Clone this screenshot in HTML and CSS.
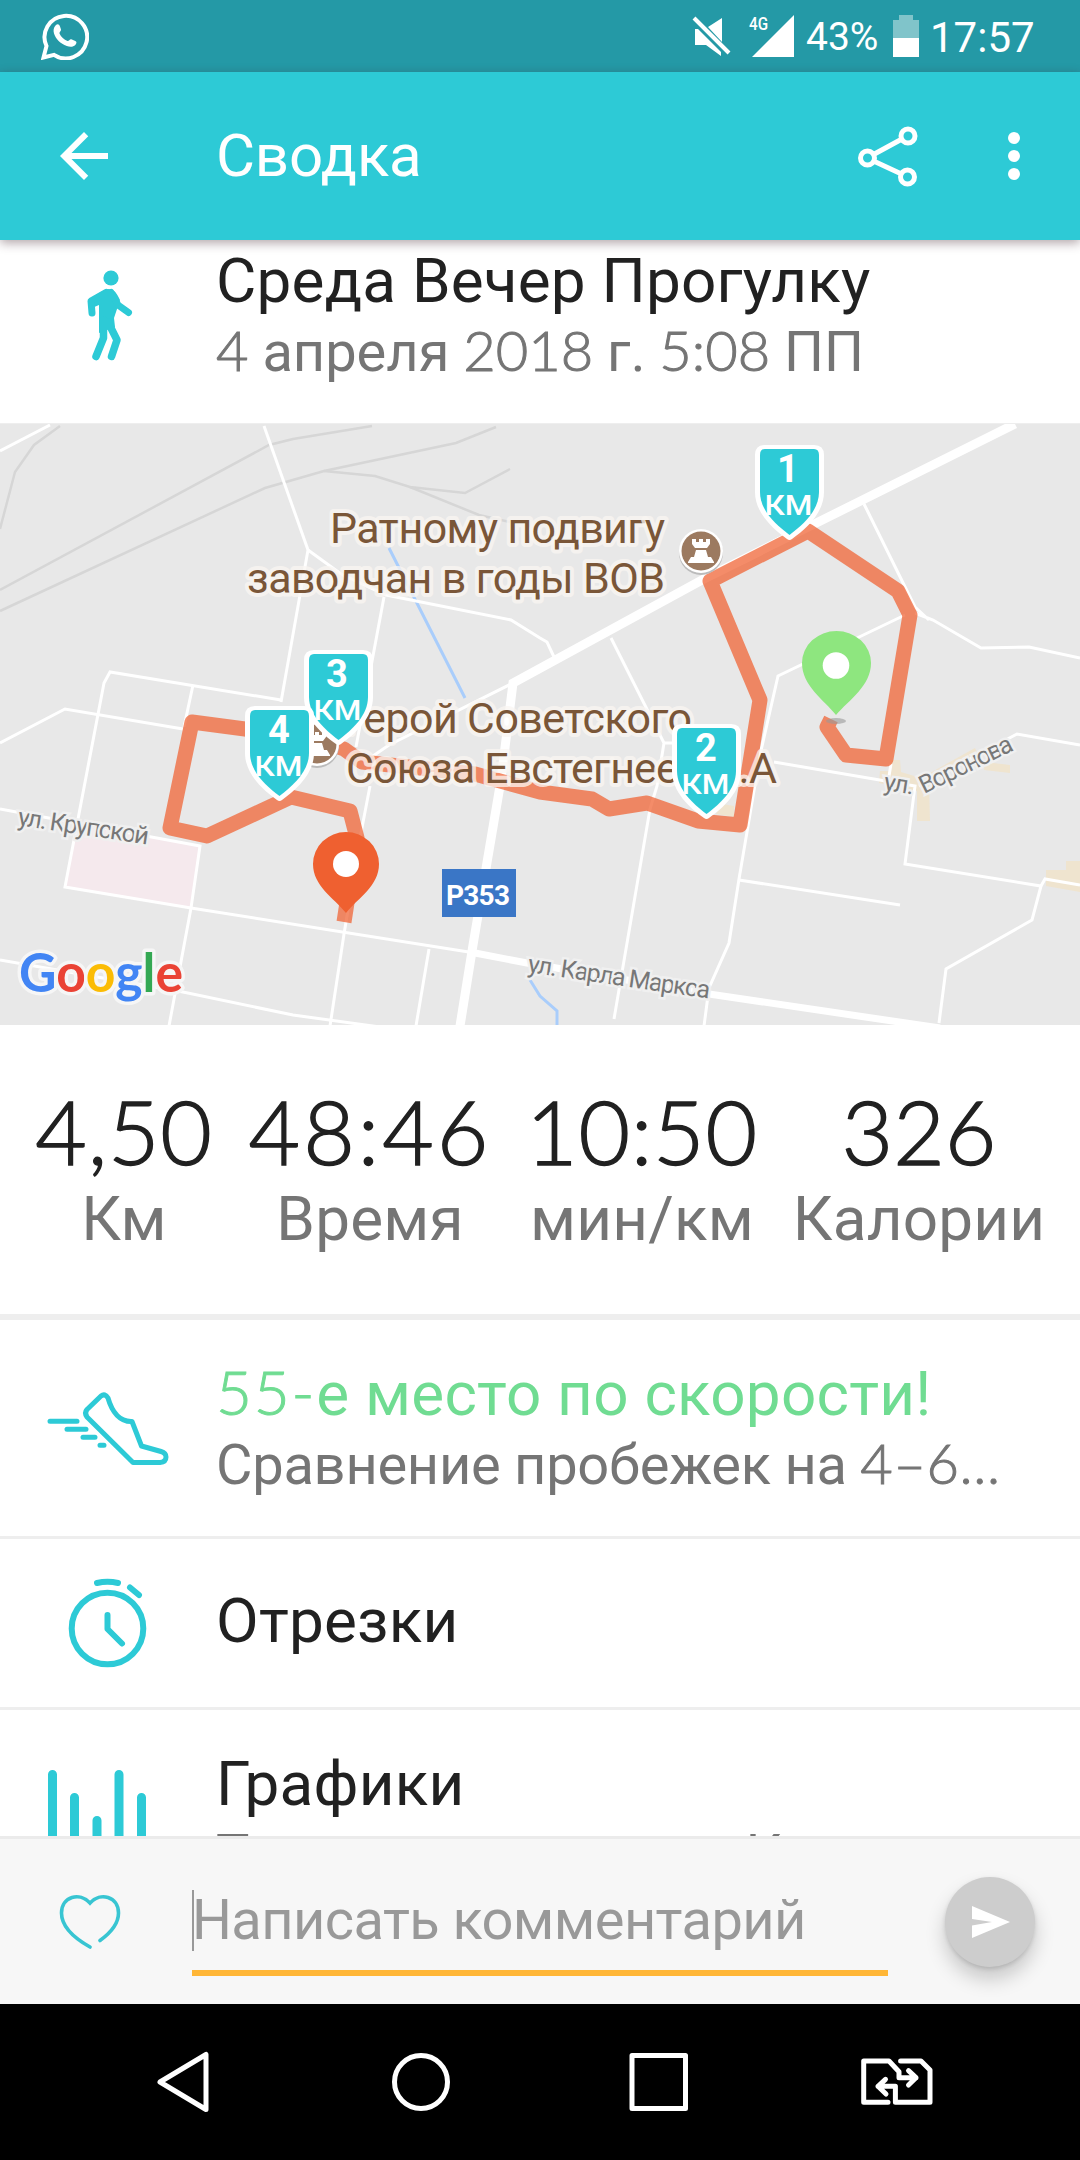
FILE: index.html
```html
<!DOCTYPE html>
<html lang="ru">
<head>
    <meta charset="UTF-8">
    <meta name="viewport" content="width=device-width, initial-scale=1.0">
    <title>Сводка</title>
    <link rel="stylesheet" href="styles.css">
</head>
<body>
    <div class="status-bar">
        <svg class="whatsapp" viewBox="0 0 48 48">
            <path d="M2.500 45.500 5.500 34A21.300 21.300 0 1 1 13 42.800Z" fill="none" stroke="#fff" stroke-width="4"/>
            <path d="M14.500 13.500c2-2 3.500-1.500 4.500 1l1 3c.4 1.500-2 2.800-1.500 4 1.500 3.500 4.500 6 8 7.500 1.200.5 2.300-2.200 3.800-1.700l4 1.700c1.800.9 1.300 2.500 0 4-2 2.200-5.500 2.200-8.500 1-6.500-2.500-11-7-12.800-12.500-.8-3-.5-6 1.500-8z" fill="#fff"/>
        </svg>
        <svg class="mute" viewBox="0 0 40 40">
            <path d="M30 2v24L16 11zM3 13h3l23 23v4L14 29H3z" fill="#fff"/>
            <path d="M2 2 37 37" stroke="#fff" stroke-width="4"/>
        </svg>
        <svg class="signal" viewBox="0 0 46 42">
            <path d="M46 0v42H4z" fill="#fff"/>
            <text x="1" y="15" textLength="19" lengthAdjust="spacingAndGlyphs">4G</text>
        </svg>
        <span class="percent">43%</span>
        <svg class="battery" viewBox="0 0 26 42">
            <path d="M6 0h14v5h6v18H0V5h6z" fill="#80c4ca"/>
            <path d="M0 23h26v19H0z" fill="#fff"/>
        </svg>
        <span class="clock">17:57</span>
    </div>

    <div class="app-bar">
        <svg class="back" viewBox="0 0 24 24"><path d="M20 11H7.830l5.590-5.590L12 4l-8 8 8 8 1.410-1.410L7.830 13H20z" fill="#fff"/></svg>
        <h1>Сводка</h1>
        <svg class="share" viewBox="0 0 60 62" fill="none" stroke="#fff" stroke-width="5">
            <circle cx="50" cy="11" r="7"/>
            <circle cx="9.500" cy="33" r="7"/>
            <circle cx="49.500" cy="52" r="7"/>
            <path d="M15.500 29.500 44 14M15.500 36 43.500 49"/>
        </svg>
        <svg class="more" viewBox="0 0 12 48" fill="#fff">
            <circle cx="6" cy="6" r="6"/><circle cx="6" cy="24" r="6"/><circle cx="6" cy="42" r="6"/>
        </svg>
    </div>

    <div class="content">
        <div class="row activity">
            <svg class="row-icon" viewBox="0 0 216 183" fill="none" stroke="#2dcad6" stroke-linecap="round" stroke-linejoin="round">
                <circle cx="111" cy="38" r="7.600" fill="#2dcad6" stroke="none"/>
                <path d="M90 61c5-6 11-10 18-12 7 0 9 5 12 11l-6 18 1 9-16 6V65l-7 3z" fill="#2dcad6" stroke="none"/>
                <path d="M92 73 91 61 106 52.500M111 52.500 118 65 128.500 72.500" stroke-width="7"/>
                <path d="M103.500 80v18L96 116.500M108 82l9 18-5.500 16.500" stroke-width="7.500"/>
            </svg>
            <div class="row-text">
                <h2 class="name">Среда Вечер Прогулку</h2>
                <p class="date"><span class="num">4</span> апреля <span class="num">2018</span> г. <span class="num">5:08</span> ПП</p>
            </div>
        </div>

        <svg class="map" viewBox="0 424 1080 601">
            <defs>
                <g id="shield">
                    <path d="M10 0H59Q69 0 69 10V47C69 68 51 84 37 94Q34.500 96 32 94C18 84 0 68 0 47V10Q0 0 10 0Z" fill="#fff"/>
                    <path d="M10 4H59Q64 4 64 10V47C64 65 49 79 34.500 90C20 79 5 65 5 47V10Q5 4 10 4Z" fill="#2dcad6"/>
                    <text class="km" x="9.500" y="69.500" textLength="48" lengthAdjust="spacingAndGlyphs">КМ</text>
                </g>
                <g id="castle">
                    <circle cx="0" cy="2" r="22" fill="#bbb"/>
                    <circle r="22" fill="#fff"/>
                    <circle r="19.500" fill="#9c7a60"/>
                    <path d="M-9-12h4v3h3v-3h4v3h3v-3h4v5l-3 4H-6l-3-4zM-5-1H5L7 6h3l3 5v1H-13v-1l3-5h3z" fill="#fff"/>
                </g>
            </defs>
            <rect y="424" width="1080" height="602" fill="#e8e8e8"/>

            <!-- areas -->
            <path d="M77 823 200 846 191 908 65 887Z" fill="#f5e9ed"/>
            <g fill="#efe4cf">
                <path d="M890 760h10l1 12 20 6 54-30 4 8-50 27 1 38h-13v-30l-38-8 1-12h10zM985 762l25 3v8l-26-3zM1046 870h20v-9h14v31l-34-6zM722 804l12 2v11l-18-3z"/>
            </g>

            <!-- railways -->
            <g class="rail">
                <path d="M0 590 269 445 293 439 372 426"/>
                <path d="M0 611 265 488 324 471 456 443 496 427"/>
                <path d="M324 471 375 476 410 487 465 493 510 469"/>
                <path d="M410 487 479 515 510 522"/>
                <path d="M0 529 15 472 34 445 60 426"/>
            </g>

            <!-- water -->
            <path d="M389 548 465 698M530 980 540 996 557 1011V1026" fill="none" stroke="#a9cdfb" stroke-width="3"/>

            <!-- streets -->
            <g class="street">
                <path d="M0 451 50 425"/>
                <path d="M264 426 308 550 281 702"/>
                <path d="M308 550 341 574 386 595 511 620 540 638 547 642 554 657"/>
                <path d="M384 597 356 747M370 786 360 838 344 934 330 1026"/>
                <path d="M370 758 389 745 511 684"/>
                <path d="M281 700 110 672 104 683 65 887 191 908 475 953"/>
                <path d="M193 685 184 727M0 743 65 709 183 729"/>
                <path d="M0 809 200 846 191 908 169 1026"/>
                <path d="M0 960 183 992 293 1015 380 1027M429 949 416 1026"/>
                <path d="M611 638 664 743 657 786 650 809 614 1019M664 743H678"/>
                <path d="M864 504 915 607 929 620M915 613 933 620 981 648 1029 647 1080 658"/>
                <path d="M905 615 778 676 760 755 747 832 739 879 729 943 709 988 704 1026"/>
                <path d="M774 762 915 786 905 864 1041 886 1045 879 1080 885"/>
                <path d="M1041 886 1032 920 946 969 939 1023"/>
                <path d="M891 764 888 782M919 786 1017 734 1080 745M739 880 900 905"/>
            </g>
            <path d="M1015 424 702 580 513 683 501 780 473 945 460 1026" fill="none" stroke="#fff" stroke-width="9"/>
            <path d="M475 953 527 963 709 994 940 1028" fill="none" stroke="#fff" stroke-width="7"/>

            <!-- street names -->
            <g class="street-name">
                <text transform="translate(17 825) rotate(8.500)" textLength="132">ул. Крупской</text>
                <text transform="translate(527 972) rotate(8.300)" textLength="184">ул. Карла Маркса</text>
                <text transform="translate(883 790) rotate(8.500)" textLength="30">ул.</text>
                <text transform="translate(924 794) rotate(-26)" textLength="101">Воронова</text>
            </g>

            <!-- track -->
            <path class="track" d="M831 719 827 727 846 755 886 759 910 615 898 591 808 531 710 581 760 700 740 825 698 821 647 803 609 809 592 799 540 792 475 774 362 762 344 749 320 741 245 729 192 722 170 828 207 836 291 797 350 811 357 838 344 922"/>

            <use href="#castle" x="701" y="551"/>
            <use href="#castle" x="317" y="744"/>
            <g class="poi">
                <text x="330" y="543" textLength="335">Ратному подвигу</text>
                <text x="247" y="593" textLength="418">заводчан в годы ВОВ</text>
                <text x="344" y="733" textLength="348">Герой Советского</text>
                <text x="346" y="783" textLength="431">Союза Евстегнеев А.А</text>
            </g>

            <rect x="442" y="869" width="74" height="48" fill="#3a76c6"/>
            <text class="road" x="446" y="905" textLength="64">Р353</text>

            <!-- kilometre marks -->
            <g class="mark" transform="translate(304 650)"><use href="#shield"/><text x="33" y="37">3</text></g>
            <g class="mark" transform="translate(245 706)"><use href="#shield"/><text x="34" y="37">4</text></g>
            <g class="mark" transform="translate(672 724)"><use href="#shield"/><text x="34" y="37">2</text></g>
            <g class="mark" transform="translate(755 445)"><use href="#shield"/><text x="33" y="37">1</text></g>

            <!-- start and finish -->
            <ellipse cx="836" cy="721" rx="10" ry="3" fill="#999" opacity=".6"/>
            <path d="M836 715C824 700 802 686 802 663A34.500 32 0 0 1 871 663C871 686 849 700 836 715Z" fill="#8ee67f"/>
            <circle cx="836" cy="665.500" r="13.300" fill="#fff"/>
            <path d="M346 913C334 898 313 886 313 864A33 32 0 0 1 379 864C379 886 358 898 346 913Z" fill="#ef6030"/>
            <circle cx="346" cy="864" r="13" fill="#fff"/>

            <text class="google" x="19" y="992" textLength="164" lengthAdjust="spacingAndGlyphs"><tspan fill="#4285f4">G</tspan><tspan fill="#ea4335">o</tspan><tspan fill="#fbbc05">o</tspan><tspan fill="#4285f4">g</tspan><tspan fill="#34a853">l</tspan><tspan fill="#ea4335">e</tspan></text>
        </svg>

        <div class="stats">
            <div class="stat"><span class="value">4,50</span><span class="label">Км</span></div>
            <div class="stat"><span class="value time">48:46</span><span class="label">Время</span></div>
            <div class="stat"><span class="value">10:50</span><span class="label">мин/км</span></div>
            <div class="stat"><span class="value calories">326</span><span class="label">Калории</span></div>
        </div>

        <div class="row rank">
            <svg class="row-icon" viewBox="0 0 216 216" fill="none" stroke="#2dcad6" stroke-width="5" stroke-linecap="round" stroke-linejoin="round">
                <path d="M101 76 87 89.500Q84 93 87 97L133 142.500H160Q166 142 166 137 166 133 161 131.500L141.500 126 132 101.500C120 102 112 92 108 78Q105 73 101 76Z"/>
                <path d="M50 101.300H77M67 109.300H86M83 117.300H95M100 125.300H104"/>
            </svg>
            <div class="row-text">
                <h2 class="place"><span class="num">55-</span>е место по скорости!</h2>
                <p class="compare">Сравнение пробежек на <span class="num">4–6...</span></p>
            </div>
        </div>

        <div class="row laps">
            <svg class="row-icon" viewBox="0 0 216 168" fill="none" stroke="#2dcad6" stroke-width="6" stroke-linecap="round" stroke-linejoin="round">
                <circle cx="107.500" cy="89.500" r="35.800"/>
                <path d="M107.500 76V90L122 104.500M97 44Q107.500 41.500 118 44M130 48.500 139 56"/>
            </svg>
            <div class="row-text">
                <h2 class="laps-title">Отрезки</h2>
            </div>
        </div>

        <div class="row charts">
            <svg class="row-icon" viewBox="0 0 216 216" stroke="#2dcad6" stroke-width="9" stroke-linecap="round">
                <path d="M52.500 64.500V160M74.500 87.500V160M97 110.500V160M119 64.500V160M141.500 87.500V160"/>
            </svg>
            <div class="row-text">
                <h2 class="charts-title">Графики</h2>
                <p class="charts-info">Темп и подъемы на Км</p>
            </div>
        </div>
    </div>

    <div class="comment-bar">
        <svg class="heart" viewBox="0 0 64 60" fill="none" stroke="#38c5d2" stroke-width="3.600" stroke-linecap="round">
            <path d="M32 52C16 43 3.500 32 3.500 18 3.500 1 22-3 32 8 42-3 60.500 1 60.500 18 60.500 29 51 39 42 45.500"/>
        </svg>
        <div class="comment-field">Написать комментарий</div>
        <div class="send">
            <svg viewBox="0 0 38 32"><path d="M0 0 38 16 0 32V19.500L20 16 0 13z" fill="#fff"/></svg>
        </div>
    </div>

    <div class="nav-bar">
        <svg viewBox="0 0 72 72"><path d="M13 36 59 8.500V63.500Z"/></svg>
        <svg viewBox="0 0 72 72"><circle cx="36" cy="36" r="26.500"/></svg>
        <svg viewBox="0 0 72 72"><path d="M9 9.500H62.500V62.500H9Z"/></svg>
        <svg viewBox="0 0 72 72"><path d="M27 56.300H2.700V15H28L38 25.700V31.700H55M47.500 24.700 55 31.700 47.500 39M39.600 15H60L69 24V56.300H34.400V40.300H17M24.500 33.300 17 40.300 25 48"/></svg>
    </div>
</body>
</html>
```

FILE: styles.css
```css
* {
    box-sizing: border-box;
}

body {
    margin: 0;
    width: 1080px;
    height: 2160px;
    display: flex;
    flex-direction: column;
    overflow: hidden;
    background: #fff;
    font-family: Roboto, sans-serif;
    color: #212121;
}

h1, h2, p {
    margin: 0;
    font-weight: 400;
    white-space: nowrap;
}

svg {
    display: block;
    flex: none;
}

.num {
    font-family: Lato, sans-serif;
    font-weight: 300;
    line-height: 1;
    -webkit-text-stroke: 1px currentColor;
}

.status-bar {
    flex: none;
    height: 72px;
    display: flex;
    align-items: center;
    padding: 0 46px 0 41px;
    background: #2499a6;
    color: #fff;
}

.whatsapp {
    width: 48px;
    height: 48px;
}

.mute {
    width: 40px;
    height: 40px;
    margin-left: auto;
}

.signal {
    width: 46px;
    height: 42px;
    margin-left: 16px;
    overflow: visible;
    font-size: 18px;
    font-weight: 500;
    fill: #fff;
}

.percent {
    width: 72px;
    margin-left: 12px;
    font-size: 39px;
    line-height: 72px;
    padding-top: 2px;
    white-space: nowrap;
}

.battery {
    width: 26px;
    height: 42px;
    margin-left: 15px;
}

.clock {
    width: 105px;
    margin: 0 -1px 0 11px;
    font-size: 42px;
    line-height: 72px;
    padding-top: 3px;
}

.app-bar {
    flex: none;
    position: relative;
    z-index: 1;
    height: 168px;
    display: flex;
    align-items: center;
    padding: 0 60px 0 48px;
    background: #2dcad6;
    color: #fff;
    box-shadow: 0 3px 10px rgba(60, 30, 40, .4);
}

.back {
    width: 72px;
    height: 72px;
}

.app-bar h1 {
    margin-left: 96px;
    font-size: 60px;
    line-height: 72px;
    letter-spacing: -.2px;
}

.share {
    width: 60px;
    height: 62px;
    margin-left: auto;
}

.more {
    width: 12px;
    height: 48px;
    margin-left: 90px;
}

.content {
    flex: none;
    height: 1596px;
    overflow: hidden;
}

.row {
    display: flex;
    background: #fff;
}

.row-icon {
    width: 216px;
}

.row-text h2 {
    font-size: 62px;
    line-height: 72px;
    letter-spacing: .22px;
}

.row-text p {
    font-size: 56px;
    line-height: 70px;
    color: #757575;
}

.activity {
    height: 184px;
    border-bottom: 1px solid #eee;
}

.activity .row-text {
    padding-top: 5px;
}

.map {
    width: 1080px;
    height: 601px;
}

.rail, .street, .track {
    fill: none;
}

.rail {
    stroke: #d6d6d6;
    stroke-width: 2.5px;
}

.street {
    stroke: #fff;
    stroke-width: 3px;
}

.track {
    stroke: #f05f2f;
    stroke-width: 15px;
    stroke-linejoin: round;
    opacity: .72;
}

.street-name {
    font-size: 25px;
    fill: #777;
    stroke: #f0f0f0;
    stroke-width: 5px;
    paint-order: stroke;
}

.poi {
    font-size: 43px;
    fill: #7a5638;
    stroke: rgba(250, 246, 242, .75);
    stroke-width: 8px;
    stroke-linejoin: round;
    paint-order: stroke;
}

.road {
    font-size: 28px;
    font-weight: 700;
    fill: #fff;
}

.mark text {
    font-size: 38px;
    font-weight: 700;
    fill: #fff;
    text-anchor: middle;
}

.km {
    font-size: 28px;
    font-weight: 500;
    fill: #fff;
    text-anchor: start;
}

.google {
    font-family: Lato, sans-serif;
    font-size: 53px;
    font-weight: 700;
    stroke: #f6f6f6;
    stroke-width: 7px;
    stroke-linejoin: round;
    paint-order: stroke;
}

.stats {
    height: 295px;
    display: grid;
    grid-template-columns: 174px 238px 226px 248px;
    column-gap: 40px;
    padding: 54px 0 0 37px;
    border-bottom: 6px solid #eee;
}

.stat {
    display: flex;
    flex-direction: column;
    align-items: center;
    white-space: nowrap;
}

.value {
    font-family: Lato, sans-serif;
    font-size: 89px;
    font-weight: 300;
    line-height: 104px;
    letter-spacing: .8px;
    -webkit-text-stroke: 1.4px currentColor;
}

.value.time {
    letter-spacing: 3px;
}

.value.calories {
    letter-spacing: 0;
}

.label {
    font-size: 62px;
    line-height: 72px;
    color: #757575;
    letter-spacing: .2px;
}

.rank {
    height: 219px;
    border-bottom: 3px solid #eee;
}

.rank .row-text {
    padding-top: 38px;
}

.rank .place {
    color: #70dc92;
    letter-spacing: .25px;
}

.place .num {
    letter-spacing: 1.8px;
}

.compare {
    letter-spacing: -.25px;
}

.compare .num {
    letter-spacing: .6px;
}

.laps {
    height: 171px;
    border-bottom: 3px solid #eee;
}

.laps .row-text {
    padding-top: 46px;
}

.charts .row-text {
    padding-top: 38px;
}

.comment-bar {
    flex: none;
    height: 168px;
    display: flex;
    align-items: flex-start;
    padding-left: 58px;
    background: #f7f7f7;
    border-top: 3px solid #ebebeb;
}

.heart {
    width: 64px;
    height: 60px;
    margin-top: 56px;
}

.comment-field {
    width: 696px;
    height: 86px;
    margin: 51px 0 0 70px;
    border-bottom: 6px solid #ffb636;
    font-size: 56px;
    line-height: 61px;
    letter-spacing: -.58px;
    color: #999;
    white-space: nowrap;
    background: linear-gradient(#999, #999) 0 0 / 2px 61px no-repeat;
}

.send {
    width: 90px;
    height: 90px;
    margin: 38px 0 0 57px;
    padding: 29px 0 0 27px;
    border-radius: 50%;
    background: #cdcdcd;
    box-shadow: 0 12px 20px rgba(0, 0, 0, .2), 0 2px 4px rgba(0, 0, 0, .12);
}

.send svg {
    width: 38px;
    height: 32px;
}

.nav-bar {
    flex: none;
    height: 156px;
    display: flex;
    align-items: center;
    gap: 166px;
    padding-left: 147px;
    background: #000;
}

.nav-bar svg {
    width: 72px;
    height: 72px;
    fill: none;
    stroke: #fff;
    stroke-width: 5px;
    stroke-linecap: round;
    stroke-linejoin: round;
}
```
